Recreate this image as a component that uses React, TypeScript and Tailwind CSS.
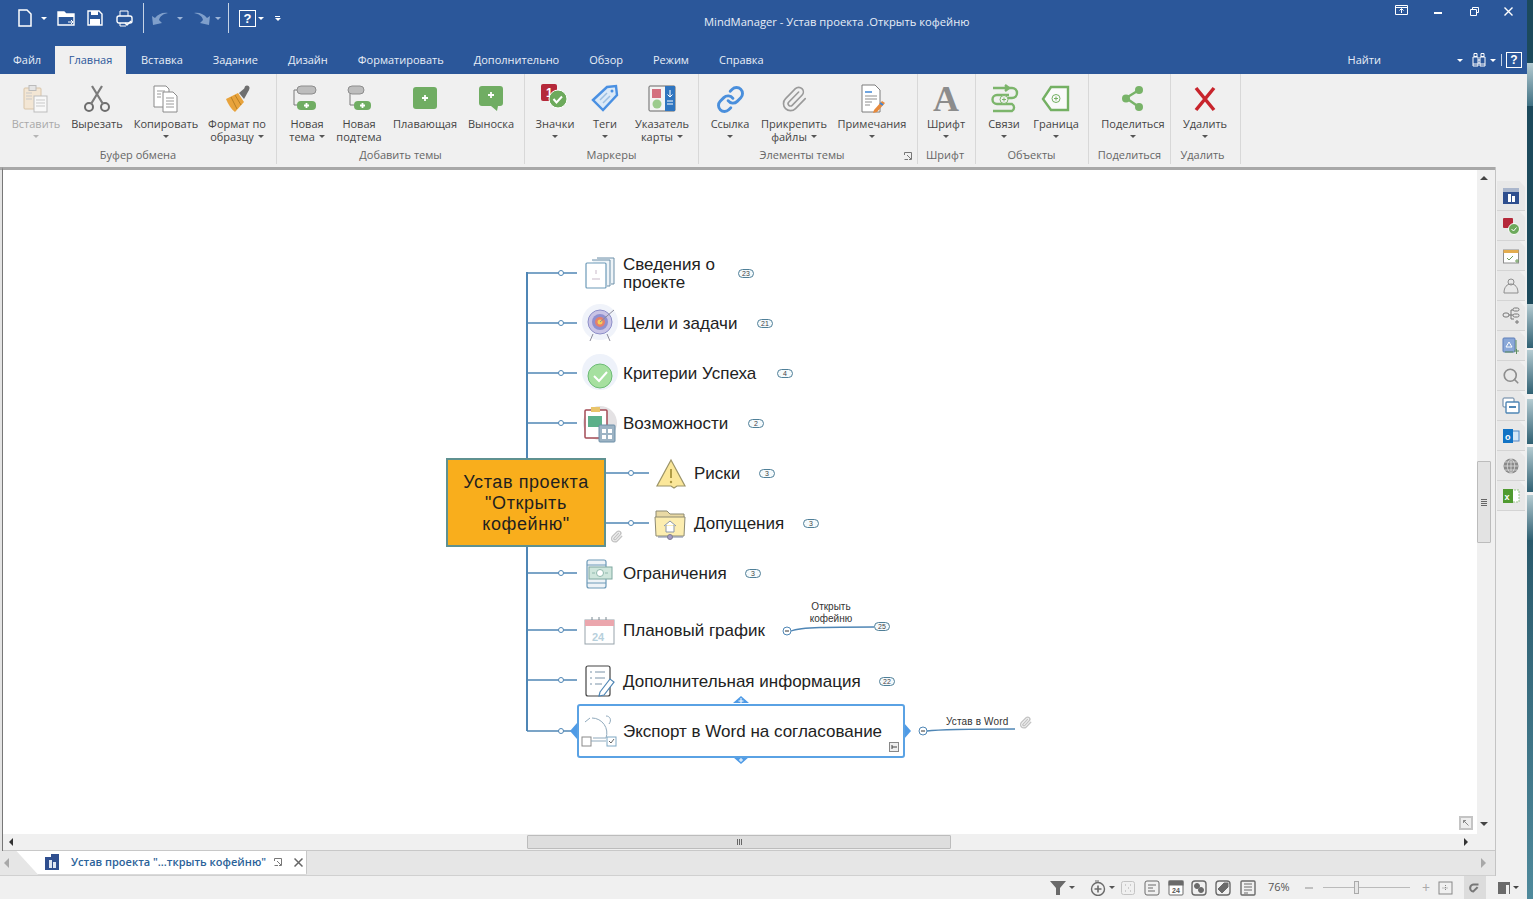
import { Link, Paperclip, Search } from "lucide-react";
import type { ReactNode } from "react";

const ui = { fontFamily: '"Open Sans", "Noto Sans", sans-serif' };

function Caret({ className = "border-t-[#555]" }: { className?: string }) {
  return <span className={`inline-block w-0 h-0 border-x-[3px] border-x-transparent border-t-[3px] ${className}`} />;
}

function Ico({ children, className = "w-[30px] h-[30px]", box = "0 0 30 30" }: { children: ReactNode; className?: string; box?: string }) {
  return (
    <svg viewBox={box} className={className} fill="none">
      {children}
    </svg>
  );
}

// ribbon icons
const Paste = () => (
  <Ico>
    <rect x="3" y="4" width="17" height="21" rx="1" fill="#f3e6d4" stroke="#d8c4a8" />
    <rect x="8" y="1.5" width="7" height="5" fill="#e5e5e5" stroke="#bbb" />
    <rect x="13" y="12" width="13" height="16" fill="#f8f8f8" stroke="#bdbdbd" />
    <path d="M15 16h9M15 19h9M15 22h9M5 9h6M5 12h6M5 15h6" stroke="#c9c9c9" />
  </Ico>
);
const Scissors = () => (
  <Ico>
    <circle cx="7" cy="23" r="4" stroke="#6d6d6d" strokeWidth="2" />
    <circle cx="23" cy="23" r="4" stroke="#6d6d6d" strokeWidth="2" />
    <path d="M9 20 20 2M21 20 10 2" stroke="#7b7b7b" strokeWidth="2.2" />
  </Ico>
);
const Copy = () => (
  <Ico>
    <path d="M3 2h12l3 3v18H3z" fill="#fff" stroke="#8a8a8a" />
    <path d="M12 8h10l4 4v16H12z" fill="#fff" stroke="#8a8a8a" />
    <path d="M6 7h8M6 10h4M6 13h4M15 14h8M15 17h8M15 20h8M15 23h8" stroke="#9a9a9a" />
  </Ico>
);
const Painter = () => (
  <Ico>
    <path d="M4 15 16 9l6 9-9 10C9 25 6 20 4 15z" fill="#e8a33c" />
    <path d="M9 13l6 12M13 11l6 10" stroke="#b97f24" />
    <path d="M17 9l7-6 3 3-5 9z" fill="#6f6f6f" />
    <circle cx="25" cy="4" r="2.5" fill="#6f6f6f" />
  </Ico>
);
const NewTopic = () => (
  <Ico>
    <rect x="5" y="2" width="19" height="8" rx="4" fill="#bdbdbd" stroke="#8d8d8d" />
    <path d="M5 6H2v15h4" stroke="#7b7b7b" />
    <rect x="5" y="17" width="19" height="9" rx="4" fill="#70ad63" />
    <path d="M14.500 19v5M12 21.500h5" stroke="#fff" strokeWidth="1.800" />
  </Ico>
);
const NewSub = () => (
  <Ico>
    <rect x="4" y="2" width="16" height="8" rx="4" fill="#bdbdbd" stroke="#8d8d8d" />
    <path d="M6 10v11h4" stroke="#7b7b7b" />
    <rect x="10" y="17" width="17" height="9" rx="4" fill="#70ad63" />
    <path d="M18.500 19v5M16 21.500h5" stroke="#fff" strokeWidth="1.800" />
  </Ico>
);
const Floating = () => (
  <Ico>
    <rect x="3" y="3" width="24" height="22" rx="3" fill="#70ad63" />
    <path d="M15 11v6M12 14h6" stroke="#fff" strokeWidth="1.800" />
  </Ico>
);
const Callout = () => (
  <Ico>
    <path d="M6 2h18a3 3 0 0 1 3 3v14a3 3 0 0 1-3 3h-2l-1 5-6-5H6a3 3 0 0 1-3-3V5a3 3 0 0 1 3-3z" fill="#70ad63" />
    <path d="M15 8v6M12 11h6" stroke="#fff" strokeWidth="1.800" />
  </Ico>
);
const Badges = () => (
  <Ico>
    <rect x="1" y="0" width="16" height="17" rx="2" fill="#b5293a" />
    <text x="6" y="13" fill="#fff" fontSize="12" fontWeight="700" fontFamily="Liberation Sans">1</text>
    <circle cx="18" cy="15" r="9" fill="#6daa5c" stroke="#fff" />
    <path d="M13.500 15l3 3.500 5.500-6" stroke="#fff" strokeWidth="2" />
  </Ico>
);
const Tag = () => (
  <Ico>
    <path d="M3 16 17 3l9-1 1 9-14 15z" fill="#dbe9f7" stroke="#4a90e2" strokeWidth="2.400" />
    <path d="M10 16l7-7M13 19l7-7" stroke="#9dbfe2" strokeWidth="1.500" />
    <circle cx="22" cy="7" r="1.500" fill="#4a90e2" />
  </Ico>
);
const Pointer = () => (
  <Ico>
    <rect x="2" y="2" width="26" height="25" rx="1" fill="#f4f4f4" stroke="#666" />
    <rect x="18" y="2" width="10" height="25" fill="#2f75c0" />
    <rect x="5" y="5" width="9" height="9" fill="#d4707f" />
    <circle cx="10" cy="20" r="4.500" fill="#9ccb8d" />
    <path d="M23 6v7M20.500 10.500 23 13l2.500-2.500" stroke="#fff" />
    <path d="M20 17h6M20 20h6" stroke="#fff" />
  </Ico>
);
const Note = () => (
  <Ico>
    <path d="M5 1h13l5 5v22H5z" fill="#fff" stroke="#7d7d7d" />
    <path d="M8 8h7" stroke="#3f87d6" strokeWidth="1.500" />
    <path d="M8 12h12M8 15h12M8 18h7M8 21h5" stroke="#8d8d8d" />
    <path d="M17 26l8-9 3 2-8 9-4 1z" fill="#e78a3d" />
    <path d="M23 19l3 2" stroke="#3f87d6" strokeWidth="2" />
  </Ico>
);
const Links = () => (
  <Ico>
    <path d="M19 4h5a4 4 0 0 1 0 10h-4" stroke="#7cb56b" strokeWidth="2.400" transform="translate(-1 0)" />
    <path d="M20 11H8a4 4 0 0 0 0 9h15a4 4 0 0 1 0 7H4" stroke="#7cb56b" strokeWidth="2.400" />
    <path d="M4 4h15M16 1l4 3-4 3" stroke="#7cb56b" strokeWidth="2.400" />
    <circle cx="15" cy="15.500" r="4" fill="#f0f0f0" stroke="#7cb56b" />
    <path d="M15 13.500v4M13 15.500h4" stroke="#7cb56b" />
  </Ico>
);
const Boundary = () => (
  <Ico>
    <path d="M10 3h17v23H10l-8-11z" stroke="#74b063" strokeWidth="2.400" fill="#fafafa" />
    <circle cx="15" cy="14.500" r="4" stroke="#74b063" />
    <path d="M15 12.500v4M13 14.500h4" stroke="#74b063" />
  </Ico>
);
const Share = () => (
  <Ico>
    <path d="M21 6 8 14l13 9" stroke="#78b368" strokeWidth="2.400" />
    <circle cx="21" cy="6" r="4" fill="#78b368" />
    <circle cx="8" cy="14.500" r="4" fill="#78b368" />
    <circle cx="21" cy="23" r="4" fill="#78b368" />
  </Ico>
);
const Delete = () => (
  <Ico>
    <path d="M6 4l18 22M24 4 6 26" stroke="#c8242c" strokeWidth="3.500" />
  </Ico>
);

type Btn = { w: string; icon: ReactNode; lines: string[]; caret?: "inline" | "below"; dim?: boolean };
type Group = { w: string; pl: string; label: string; labelX: string; launcher?: boolean; items: Btn[] };

const groups: Group[] = [
  {
    w: "w-[277px]", pl: "pl-[6px]", label: "Буфер обмена", labelX: "pl-0",
    items: [
      { w: "w-[60px]", icon: <Paste />, lines: ["Вставить"], caret: "below", dim: true },
      { w: "w-[62px]", icon: <Scissors />, lines: ["Вырезать"] },
      { w: "w-[76px]", icon: <Copy />, lines: ["Копировать"], caret: "below" },
      { w: "w-[66px]", icon: <Painter />, lines: ["Формат по", "образцу"], caret: "inline" },
    ],
  },
  {
    w: "w-[248px]", pl: "pl-[4px]", label: "Добавить темы", labelX: "pl-0",
    items: [
      { w: "w-[52px]", icon: <NewTopic />, lines: ["Новая", "тема"], caret: "inline" },
      { w: "w-[52px]", icon: <NewSub />, lines: ["Новая", "подтема"] },
      { w: "w-[80px]", icon: <Floating />, lines: ["Плавающая"] },
      { w: "w-[52px]", icon: <Callout />, lines: ["Выноска"] },
    ],
  },
  {
    w: "w-[174px]", pl: "pl-[5px]", label: "Маркеры", labelX: "pl-0",
    items: [
      { w: "w-[50px]", icon: <Badges />, lines: ["Значки"], caret: "below" },
      { w: "w-[50px]", icon: <Tag />, lines: ["Теги"], caret: "below" },
      { w: "w-[64px]", icon: <Pointer />, lines: ["Указатель", "карты"], caret: "inline" },
    ],
  },
  {
    w: "w-[219px]", pl: "pl-[3px]", label: "Элементы темы", labelX: "pr-[12px]", launcher: true,
    items: [
      { w: "w-[56px]", icon: <Link className="w-[29px] h-[29px] text-[#4a8fdc]" strokeWidth={2.4} />, lines: ["Ссылка"], caret: "below" },
      { w: "w-[72px]", icon: <Paperclip className="w-[28px] h-[28px] text-[#9a9a9a]" strokeWidth={1.4} />, lines: ["Прикрепить", "файлы"], caret: "inline" },
      { w: "w-[84px]", icon: <Note />, lines: ["Примечания"], caret: "below" },
    ],
  },
  {
    w: "w-[58px]", pl: "pl-0", label: "Шрифт", labelX: "pr-[3px]",
    items: [
      {
        w: "w-[56px]",
        icon: <span className="text-[36px] leading-[30px] text-[#8c8c8c] font-bold" style={{ fontFamily: "Liberation Serif" }}>A</span>,
        lines: ["Шрифт"],
        caret: "below",
      },
    ],
  },
  {
    w: "w-[113px]", pl: "pl-[3px]", label: "Объекты", labelX: "pr-[1px]",
    items: [
      { w: "w-[50px]", icon: <Links />, lines: ["Связи"], caret: "below" },
      { w: "w-[54px]", icon: <Boundary />, lines: ["Граница"], caret: "below" },
    ],
  },
  {
    w: "w-[82px]", pl: "pl-[4px]", label: "Поделиться", labelX: "pl-0",
    items: [{ w: "w-[80px]", icon: <Share />, lines: ["Поделиться"], caret: "below" }],
  },
  {
    w: "w-[70px]", pl: "pl-[4px]", label: "Удалить", labelX: "pr-[6px]",
    items: [{ w: "w-[60px]", icon: <Delete />, lines: ["Удалить"], caret: "below" }],
  },
];

function RibbonButton({ b }: { b: Btn }) {
  return (
    <div className={`${b.w} flex flex-col items-center shrink-0 ${b.dim ? "text-[#a9a9a9]" : "text-[#444]"}`}>
      <div className="h-[30px] w-[30px] flex items-center justify-center mt-[10px] mb-[3px]">{b.icon}</div>
      {b.lines.map((l, i) => (
        <div key={l} className="text-[11px] leading-[13px] whitespace-nowrap flex items-center gap-[4px]">
          {l}
          {b.caret === "inline" && i === b.lines.length - 1 && <Caret />}
        </div>
      ))}
      {b.caret === "below" && (
        <div className="h-[13px] flex items-center">
          <Caret className={b.dim ? "border-t-[#b5b5b5]" : "border-t-[#555]"} />
        </div>
      )}
    </div>
  );
}

function RibbonGroup({ g }: { g: Group }) {
  return (
    <div className={`${g.w} shrink-0 h-[90px] flex flex-col border-r border-[#d8d8d8]`}>
      <div className={`flex ${g.pl} h-[74px]`}>
        {g.items.map((b) => (
          <RibbonButton key={b.lines[0]} b={b} />
        ))}
      </div>
      <div className={`relative h-[14px] text-[11px] leading-[14px] text-[#666] text-center ${g.labelX}`}>
        {g.label}
        {g.launcher && (
          <svg viewBox="0 0 8 8" className="absolute right-[5px] top-[4px] w-[8px] h-[8px]" fill="none" stroke="#777">
            <path d="M0.500 3V0.500H7.500M0.500 7.500H4M7.500 0.500V7.500H5M3 3l4 4" />
          </svg>
        )}
      </div>
    </div>
  );
}

const QatWhite = "#fff";

function Qat() {
  return (
    <div className="w-[704px] shrink-0 flex items-center h-[36px] pl-[17px]">
      <Ico className="w-[16px] h-[18px]" box="0 0 16 18">
        <path d="M2 1h8l4 4v12H2z" stroke={QatWhite} strokeWidth="1.500" />
      </Ico>
      <span className="ml-[8px] flex"><Caret className="border-t-white" /></span>
      <Ico className="w-[18px] h-[18px] ml-[10px]" box="0 0 18 18">
        <path d="M1 3h6l2 2h8v11H1z" stroke={QatWhite} strokeWidth="1.400" />
        <path d="M1 3h6l2 2h8v3H1z" fill={QatWhite} />
        <path d="M11 13h5M14 11l2 2-2 2" stroke={QatWhite} />
      </Ico>
      <Ico className="w-[16px] h-[16px] ml-[12px]" box="0 0 16 16">
        <path d="M1 1h11l3 3v11H1z" stroke={QatWhite} strokeWidth="1.400" />
        <path d="M4 1h7v4H4zM3 9h10v6H3z" fill={QatWhite} />
      </Ico>
      <Ico className="w-[17px] h-[17px] ml-[13px]" box="0 0 17 17">
        <path d="M4 6V1h8v5" stroke={QatWhite} />
        <rect x="1" y="6" width="15" height="7" rx="2" stroke={QatWhite} strokeWidth="1.400" />
        <path d="M4 13v3h6" stroke={QatWhite} />
        <path d="M9 13l2 2 4-4" stroke={QatWhite} strokeWidth="1.400" />
      </Ico>
      <div className="w-px h-[30px] bg-[#c5d3e6] ml-[10px]" />
      <Ico className="w-[18px] h-[16px] ml-[7px]" box="0 0 18 16">
        <path d="M2 15 1 6l3 2c3-4 8-6 13-5-5 1-8 3-9 7l3 3z" fill="#7f9fcb" />
      </Ico>
      <span className="ml-[8px] flex"><Caret className="border-t-[#9db5d8]" /></span>
      <Ico className="w-[18px] h-[16px] ml-[10px]" box="0 0 18 16">
        <path d="M16 15l1-9-3 2C11 4 6 2 1 3c5 1 8 3 9 7l-3 3z" fill="#7f9fcb" />
      </Ico>
      <span className="ml-[4px] flex"><Caret className="border-t-[#9db5d8]" /></span>
      <div className="w-px h-[30px] bg-[#c5d3e6] ml-[7px]" />
      <div className="ml-[10px] w-[17px] h-[17px] border border-white flex items-center justify-center text-white text-[13px] font-bold leading-none" style={{ fontFamily: "Liberation Sans" }}>?</div>
      <span className="ml-[2px] flex"><Caret className="border-t-white" /></span>
      <span className="ml-[11px] flex flex-col gap-[1px]">
        <span className="w-[5px] h-px bg-white" />
        <Caret className="border-t-white" />
      </span>
    </div>
  );
}

function WindowButtons() {
  return (
    <div className="ml-auto flex items-start pt-[4px] h-[36px] text-white">
      <svg viewBox="0 0 13 10" className="w-[13px] h-[10px] mt-[1px] mr-[26px]" fill="none" stroke="#fff">
        <path d="M0.500 0.500h12v9H0.500zM0.500 2.500h12M6.500 8V4M4.500 5.500l2-2 2 2" />
      </svg>
      <div className="w-[8px] h-[2px] bg-white mt-[8px] mr-[28px]" />
      <svg viewBox="0 0 9 9" className="w-[9px] h-[9px] mt-[3px] mr-[25px]" fill="none" stroke="#fff">
        <path d="M2.500 2V0.500h6v5H7M0.500 2.500h6v6h-6z" />
      </svg>
      <svg viewBox="0 0 9 9" className="w-[9px] h-[9px] mt-[3px] mr-[14px]" fill="none" stroke="#fff" strokeWidth="1.400">
        <path d="M0.500 0.500l8 8M8.500 0.500l-8 8" />
      </svg>
    </div>
  );
}

const tabs = ["Вставка", "Задание", "Дизайн", "Форматировать", "Дополнительно", "Обзор", "Режим", "Справка"];

function TabRow() {
  return (
    <div className="h-[28px] flex items-end text-[11px] text-[#e8eef7]">
      <div className="w-[55px] pl-[13px] h-[28px] flex items-center">Файл</div>
      <div className="bg-[#f0f0f0] text-[#2b579a] h-[28px] w-[71px] flex items-center justify-center">Главная</div>
      {tabs.map((t) => (
        <div key={t} className="px-[15px] h-[28px] flex items-center">{t}</div>
      ))}
      <div className="ml-auto h-[28px] flex items-center">
        <span>Найти</span>
        <span className="ml-[76px] flex"><Caret className="border-t-white" /></span>
        <svg viewBox="0 0 16 16" className="w-[16px] h-[16px] ml-[8px]" fill="none" stroke="#fff">
          <path d="M3 1.500h3v3H3zM10 1.500h3v3h-3zM2 5h5v9H2zM9 5h5v9H9zM7 8h2M7 11h2M2 12h5M9 12h5" />
        </svg>
        <span className="ml-[3px] flex"><Caret className="border-t-white" /></span>
        <div className="w-px h-[12px] bg-[#c5d3e6] ml-[5px]" />
        <div className="ml-[4px] mr-[5px] w-[16px] h-[16px] border border-white text-white text-[12px] font-bold flex items-center justify-center leading-none" style={{ fontFamily: "Liberation Sans" }}>?</div>
      </div>
    </div>
  );
}

// map: page coordinates, origin of the map box is (440, 250)
const nodes = [
  { c: "left-[183px] top-[64px]", t: "Цели и задачи" },
  { c: "left-[183px] top-[114px]", t: "Критерии Успеха" },
  { c: "left-[183px] top-[164px]", t: "Возможности" },
  { c: "left-[254px] top-[214px]", t: "Риски" },
  { c: "left-[254px] top-[264px]", t: "Допущения" },
  { c: "left-[183px] top-[314px]", t: "Ограничения" },
  { c: "left-[183px] top-[371px]", t: "Плановый график" },
  { c: "left-[183px] top-[422px]", t: "Дополнительная информация" },
  { c: "left-[183px] top-[472px]", t: "Экспорт в Word на согласование" },
];

const pills = [
  { c: "left-[298px] top-[19px]", t: "23" },
  { c: "left-[317px] top-[69px]", t: "21" },
  { c: "left-[337px] top-[119px]", t: "4" },
  { c: "left-[308px] top-[169px]", t: "2" },
  { c: "left-[319px] top-[219px]", t: "3" },
  { c: "left-[363px] top-[269px]", t: "3" },
  { c: "left-[305px] top-[319px]", t: "3" },
  { c: "left-[434px] top-[372px]", t: "25" },
  { c: "left-[439px] top-[427px]", t: "22" },
];

const stubs = [273, 323, 373, 423, 573, 630, 680, 731];

function Connectors() {
  const line = "#4f86b5";
  return (
    <>
      <path d="M527 272V458M527 547V731" stroke={line} strokeWidth="2" />
      {stubs.map((y) => (
        <g key={y}>
          <path d={`M527 ${y}H577`} stroke={line} strokeWidth="1.600" />
          <circle cx="561" cy={y} r="2.500" fill="#fff" stroke={line} />
        </g>
      ))}
      {[473, 523].map((y) => (
        <g key={y}>
          <path d={`M606 ${y}H649`} stroke={line} strokeWidth="1.600" />
          <circle cx="631" cy={y} r="2.500" fill="#fff" stroke={line} />
        </g>
      ))}
      <path d="M791 631c10-4 40-4 83-4" stroke={line} strokeWidth="1.300" />
      <circle cx="787" cy="631" r="4" fill="#fff" stroke={line} />
      <path d="M785 631h4" stroke="#333" />
      <path d="M927 731c16-2 50-2 88-2" stroke={line} strokeWidth="1.600" />
      <circle cx="923" cy="731" r="4" fill="#fff" stroke={line} />
      <path d="M921 731h4" stroke="#333" />
    </>
  );
}

function MapIcons() {
  return (
    <>
      {/* сведения */}
      <path d="M597 258h17v26h-3M592 260h18v26h-3" stroke="#6d8fa8" fill="#eef4f8" />
      <rect x="586" y="263" width="20" height="25" rx="1" fill="#fff" stroke="#6d9ab8" strokeWidth="1.200" />
      <path d="M596 270v4M592 279h8" stroke="#c9b9c9" />
      {/* цели */}
      <circle cx="600" cy="322" r="18" fill="#f0f3fa" />
      <circle cx="600" cy="322" r="12" fill="#c9c4e6" stroke="#8d8fc8" />
      <circle cx="600" cy="322" r="8" fill="#8f8fd0" />
      <circle cx="600" cy="322" r="5" fill="#e57f6d" />
      <circle cx="600" cy="322" r="2.500" fill="#f4cf5d" />
      <path d="M600 322l14-12M593 334l-3 7M607 334l3 7" stroke="#8a8a9a" />
      {/* критерии */}
      <circle cx="600" cy="372" r="18" fill="#eef2fa" />
      <circle cx="600" cy="376" r="12" fill="#a6e0a0" stroke="#6dbb76" />
      <path d="M594 376l5 5 8-9" stroke="#fff" strokeWidth="2" />
      {/* возможности */}
      <circle cx="600" cy="423" r="17" fill="#e4e2e4" />
      <rect x="585" y="410" width="22" height="28" rx="1" fill="#fff" stroke="#a34b56" strokeWidth="1.500" />
      <rect x="591" y="407" width="9" height="5" fill="#e9c46a" />
      <rect x="588" y="416" width="14" height="11" fill="#5cb08a" />
      <rect x="599" y="425" width="16" height="17" rx="1" fill="#9cb3c4" stroke="#6d8fa8" />
      <path d="M602 429h4v4h-4zM608 429h4v4h-4zM602 435h4v4h-4zM608 435h4v4h-4z" fill="#fff" />
      {/* риски */}
      <path d="M671 460l14 26-8 0-3 2-3-2h-14z" fill="#fbe79a" stroke="#9c9468" strokeWidth="1.200" />
      <path d="M671 469v9" stroke="#a8943f" strokeWidth="1.800" />
      <circle cx="671" cy="482" r="1.200" fill="#a8943f" />
      {/* допущения */}
      <path d="M656 511h11l3 3h14v5h-28z" fill="#e9d9a4" stroke="#8d8a73" />
      <path d="M655 517h30l-1 19h-28z" fill="#fcedb0" stroke="#8d8a73" />
      <path d="M664 526l6-5 6 5M666 525v7h8v-7" stroke="#8b97a8" fill="#fff" />
      <path d="M658 537h25" stroke="#7d86a0" />
      <circle cx="670" cy="537" r="2.500" fill="#a59ac4" stroke="#7d7d90" />
      {/* ограничения */}
      <rect x="587" y="560" width="19" height="28" rx="2" fill="#eef3f7" stroke="#6d9ab8" strokeWidth="1.200" />
      <path d="M587 565h19M587 583h19" stroke="#6d9ab8" />
      <rect x="589" y="567" width="23" height="12" fill="#cfe6dc" stroke="#7fa8a0" />
      <circle cx="600" cy="573" r="3.500" fill="#fff" stroke="#8fb8ac" />
      <path d="M592 573h3M605 573h3" stroke="#8fb8ac" />
      {/* график */}
      <rect x="585" y="620" width="29" height="24" fill="#fff" stroke="#97a3ab" />
      <rect x="585" y="620" width="29" height="6" fill="#eba6ad" />
      <path d="M592 617v3M599 617v3M606 617v3" stroke="#7d8a93" />
      <text x="592" y="641" fill="#b7d0dc" fontSize="11" fontWeight="700" fontFamily="Liberation Sans">24</text>
      {/* доп */}
      <rect x="586" y="666" width="24" height="30" rx="2" fill="#fff" stroke="#444" strokeWidth="1.200" />
      <path d="M590 672h2M590 678h2M590 684h2M595 672h10M595 678h10M595 684h7" stroke="#7a93a8" />
      <path d="M600 692l10-13 4 3-10 13-5 1z" fill="#fff" stroke="#4f86b5" strokeWidth="1.200" />
      {/* выделенный */}
      <path d="M741 696l8 7h-16zM741 764l8-7h-16zM570 731l7-8v16zM911 731l-7-8v16z" fill="#4f9be6" />
      <rect x="578" y="705" width="326" height="52" rx="2" fill="#fff" stroke="#5aa2e4" strokeWidth="2" />
      <path d="M741 698v5M738.500 701h5M741 758v4M739 760h4" stroke="#fff" />
      <path d="M592 718a15 15 0 0 1 14 20H593" stroke="#8fa9bc" />
      <path d="M606 716c4 0 6 4 3 8" stroke="#8fa9bc" />
      <path d="M585 722l5-4" stroke="#8fa9bc" />
      <rect x="582" y="737" width="9" height="9" stroke="#8a8a8a" fill="#fff" />
      <path d="M591 741h15" stroke="#8fa9bc" />
      <rect x="607" y="737" width="9" height="9" stroke="#7ea8c4" fill="#fff" />
      <path d="M609 741l2 2 3-4" stroke="#666" />
      <rect x="889.500" y="742.500" width="9" height="9" fill="#eee" stroke="#888" />
      <path d="M892 747h5M892 745v4" stroke="#444" />
    </>
  );
}

function Clip({ c }: { c: string }) {
  return <Paperclip className={`absolute ${c} w-[13px] h-[13px] text-[#c4c4c4]`} strokeWidth={2.6} />;
}

function MindMap() {
  return (
    <div className="relative w-[600px] h-[520px]" style={{ fontFamily: '"Liberation Sans", sans-serif' }}>
      <svg viewBox="440 250 600 520" className="absolute inset-0 w-[600px] h-[520px]" fill="none">
        <Connectors />
        <MapIcons />
      </svg>
      <div className="absolute left-[6px] top-[208px] w-[160px] h-[89px] pt-[1px] bg-[#f9ae1c] border-2 border-[#5f9190] flex items-center justify-center text-center text-[18px] leading-[21px] tracking-[0.6px] text-[#1f1f1f]">
        <div>
          Устав проекта
          <br />
          "Открыть
          <br />
          кофейню"
        </div>
      </div>
      <div className="absolute left-[183px] top-[6px] text-[17px] leading-[18px] text-[#222]">
        Сведения о
        <br />
        проекте
      </div>
      {nodes.map((n) => (
        <div key={n.t} className={`absolute ${n.c} text-[17px] leading-[20px] text-[#222] whitespace-nowrap`}>
          {n.t}
        </div>
      ))}
      {pills.map((p) => (
        <div key={p.c} className={`absolute ${p.c} w-[16px] h-[9px] rounded-full border border-[#4f7f98] bg-[#f5fafc] text-[7px] leading-[7px] text-center text-[#444]`}>
          {p.t}
        </div>
      ))}
      <div className="absolute left-[360px] top-[351px] w-[62px] text-center text-[10px] leading-[12px] text-[#333]">
        Открыть
        <br />
        кофейню
      </div>
      <div className="absolute left-[506px] top-[466px] text-[10px] leading-[12px] tracking-[0.15px] text-[#333] whitespace-nowrap">Устав в Word</div>
      <Clip c="left-[170px] top-[280px]" />
      <Clip c="left-[579px] top-[466px]" />
    </div>
  );
}

function SideTab({ children }: { children: ReactNode }) {
  return (
    <div className="w-[28px] h-[30px] pr-[1px] bg-[#e8e8e8] border-b border-[#d4d4d4] flex items-center justify-center [clip-path:polygon(0_0,80%_0,100%_20%,100%_100%,0_100%)]">
      {children}
    </div>
  );
}

function SideBar() {
  const s = "w-[18px] h-[18px]";
  return (
    <div className="w-[32px] shrink-0 bg-[#f0f0f0] border-l border-[#c4c4c4] flex flex-col pl-[1px] pt-[14px]">
      <SideTab>
        <Ico className={s} box="0 0 18 18">
          <rect x="1" y="1" width="16" height="16" fill="#2f4f8f" />
          <rect x="1" y="1" width="16" height="4" fill="#aab6cc" />
          <path d="M6 7h3v8H6zM10 9h3v6h-3z" fill="#fff" />
        </Ico>
      </SideTab>
      <SideTab>
        <Ico className={s} box="0 0 18 18">
          <rect x="1" y="1" width="10" height="10" rx="1" fill="#b5293a" />
          <circle cx="12" cy="12" r="5.500" fill="#6daa5c" stroke="#fff" />
          <path d="M9.500 12l2 2 3-3.500" stroke="#fff" />
        </Ico>
      </SideTab>
      <SideTab>
        <Ico className={s} box="0 0 18 18">
          <rect x="1.500" y="3" width="15" height="13" stroke="#8d8d8d" fill="#fff" />
          <rect x="1.500" y="3" width="15" height="3" fill="#e3ac4e" />
          <path d="M5 11l2 2 4-4M13 14h4M15 12v4" stroke="#6f9e5c" />
        </Ico>
      </SideTab>
      <SideTab>
        <Ico className={s} box="0 0 18 18">
          <circle cx="9" cy="5" r="3" stroke="#8d8d8d" />
          <path d="M2 16c0-6 3-9 7-9s7 3 7 9z" stroke="#8d8d8d" />
        </Ico>
      </SideTab>
      <SideTab>
        <Ico className={s} box="0 0 18 18">
          <rect x="1" y="6" width="6" height="4" rx="2" stroke="#777" />
          <rect x="11" y="1" width="6" height="3" rx="1.500" stroke="#777" />
          <rect x="11" y="7" width="6" height="3" rx="1.500" stroke="#777" />
          <path d="M7 8h4M9 3h2M9 3v9h3M13 15h4M15 13v4" stroke="#777" />
        </Ico>
      </SideTab>
      <SideTab>
        <Ico className={s} box="0 0 18 18">
          <rect x="1" y="1" width="12" height="14" rx="1" fill="#8aa8d8" stroke="#5f7fb8" />
          <path d="M4 10l3-5 3 5z" stroke="#fff" />
          <path d="M14 3v10M3 15h8M12 14h5M14.500 12v5" stroke="#5f8f5f" />
        </Ico>
      </SideTab>
      <SideTab>
        <Search className="w-[18px] h-[18px] text-[#8d8d8d]" strokeWidth={2.2} />
      </SideTab>
      <SideTab>
        <Ico className={s} box="0 0 18 18">
          <rect x="1" y="1" width="11" height="9" rx="1" stroke="#5f7f9f" fill="#fff" />
          <rect x="4" y="5" width="13" height="11" rx="1" stroke="#4f86b5" strokeWidth="1.400" fill="#fff" />
          <path d="M7 10h7" stroke="#4f86b5" strokeWidth="2" />
        </Ico>
      </SideTab>
      <SideTab>
        <Ico className={s} box="0 0 18 18">
          <rect x="8" y="4" width="9" height="10" fill="#d5e6f7" stroke="#4f86c5" />
          <rect x="1" y="2" width="10" height="14" fill="#1273c4" />
          <text x="3" y="12.500" fill="#fff" fontSize="9" fontWeight="700" fontFamily="Liberation Sans">o</text>
        </Ico>
      </SideTab>
      <SideTab>
        <Ico className={s} box="0 0 18 18">
          <circle cx="9" cy="9" r="7.500" fill="#8a8a8a" />
          <path d="M2 9h14M3 5h12M3 13h12M9 1.500v15M9 1.500c-5 4-5 11 0 15M9 1.500c5 4 5 11 0 15" stroke="#e8e8e8" strokeWidth="0.700" />
        </Ico>
      </SideTab>
      <SideTab>
        <Ico className={s} box="0 0 18 18">
          <rect x="9" y="3" width="8" height="12" fill="#fff" stroke="#9cc48c" strokeDasharray="2 1" />
          <rect x="1" y="2" width="10" height="14" fill="#4f9a2f" />
          <text x="2.500" y="12.500" fill="#fff" fontSize="9" fontWeight="700" fontFamily="Liberation Sans">x</text>
        </Ico>
      </SideTab>
    </div>
  );
}

function VScroll() {
  return (
    <div className="w-[14px] shrink-0 bg-[#f0f0f0] flex flex-col items-center">
      <div className="h-[16px] flex items-center">
        <span className="w-0 h-0 border-x-[4px] border-x-transparent border-b-[4px] border-b-[#444]" />
      </div>
      <div className="h-[275px]" />
      <div className="w-[14px] h-[82px] bg-[#e3e3e3] border border-[#bcbcbc] rounded-[1px] flex flex-col items-center justify-center gap-[1px]">
        <span className="w-[6px] h-px bg-[#666]" />
        <span className="w-[6px] h-px bg-[#666]" />
        <span className="w-[6px] h-px bg-[#666]" />
        <span className="w-[6px] h-px bg-[#666]" />
      </div>
      <div className="flex-1" />
      <div className="relative h-[16px] mb-[2px] flex items-center">
        <span className="w-0 h-0 border-x-[4px] border-x-transparent border-t-[4px] border-t-[#444]" />
        <div className="absolute -left-[21px] top-0 w-[14px] h-[14px] border-2 border-[#c4c4c4] bg-[#eee] flex items-center justify-center">
          <svg viewBox="0 0 7 7" className="w-[7px] h-[7px]" fill="none" stroke="#888">
            <path d="M0.500 3V0.500H3M0.500 0.500l5 5" />
          </svg>
        </div>
      </div>
    </div>
  );
}

function HScroll() {
  return (
    <div className="h-[17px] bg-[#f0f0f0] flex items-center border-b border-[#c8c8c8]">
      <span className="ml-[6px] w-0 h-0 border-y-[4px] border-y-transparent border-r-[4px] border-r-[#333]" />
      <div className="ml-[514px] w-[424px] h-[14px] bg-[#dedede] border border-[#bcbcbc] rounded-[1px] flex items-center justify-center gap-[1px]">
        <span className="w-px h-[6px] bg-[#666]" />
        <span className="w-px h-[6px] bg-[#666]" />
        <span className="w-px h-[6px] bg-[#666]" />
      </div>
      <span className="ml-[513px] w-0 h-0 border-y-[4px] border-y-transparent border-l-[4px] border-l-[#333]" />
    </div>
  );
}

function TabBar() {
  return (
    <div className="h-[25px] bg-[#e6e6e6] border-b border-[#d0d0d0] flex items-center">
      <span className="ml-[4px] w-0 h-0 border-y-[5px] border-y-transparent border-r-[5px] border-r-[#a8a8a8]" />
      <div className="ml-[7px] w-[291px] h-[24px] -mt-[1px] bg-white border-r border-b border-[#c8c8c8] rounded-br-[2px] flex items-center pl-[29px] [clip-path:polygon(0_0,100%_0,100%_100%,22px_100%)]">
        <Ico className="w-[14px] h-[16px]" box="0 0 14 16">
          <rect x="0" y="0" width="14" height="16" fill="#2f4f8f" />
          <rect x="0" y="0" width="6" height="3" fill="#fff" />
          <path d="M4 6h3v8H4zM8 8h3v6H8z" fill="#dfe6f2" />
        </Ico>
        <span className="ml-[12px] w-[191px] text-[11px] font-semibold text-[#2b6299] whitespace-nowrap">Устав проекта "...ткрыть кофейню"</span>
        <svg viewBox="0 0 8 8" className="ml-[12px] w-[8px] h-[8px]" fill="none" stroke="#777">
          <path d="M0.500 3V0.500H7.500M0.500 7.500H4M7.500 0.500V7.500H5M3 3l4 4" />
        </svg>
        <svg viewBox="0 0 9 9" className="ml-[12px] w-[9px] h-[9px]" fill="none" stroke="#666" strokeWidth="1.500">
          <path d="M0.500 0.500l8 8M8.500 0.500l-8 8" />
        </svg>
      </div>
      <span className="ml-auto mr-[9px] w-0 h-0 border-y-[5px] border-y-transparent border-l-[5px] border-l-[#a8a8a8]" />
    </div>
  );
}

function StatusIcon({ children, c }: { children: ReactNode; c: string }) {
  return (
    <svg viewBox="0 0 16 16" className={`w-[16px] h-[16px] ${c}`} fill="none" stroke="#6a6a6a">
      {children}
    </svg>
  );
}

function StatusBar() {
  return (
    <div className="h-[23px] bg-[#f0f0f0] flex items-center text-[11px] text-[#555]">
      <StatusIcon c="ml-[1050px]">
        <path d="M0 1h16L10 8v7H6V8z" fill="#6a6a6a" stroke="none" />
      </StatusIcon>
      <span className="ml-[3px] flex"><Caret /></span>
      <StatusIcon c="ml-[15px]">
        <circle cx="8" cy="9" r="6.500" strokeWidth="1.400" />
        <path d="M8 5.500v7M4.500 9h7" strokeWidth="1.600" />
        <path d="M5 1h4" />
      </StatusIcon>
      <span className="ml-[3px] flex"><Caret /></span>
      <StatusIcon c="ml-[5px]">
        <rect x="1.500" y="1.500" width="13" height="13" rx="2" stroke="#c4c4c4" />
        <path d="M5 5h1M10 5h1M8 8h1M5 11h1M10 11h1" stroke="#aaa" />
      </StatusIcon>
      <StatusIcon c="ml-[8px]">
        <rect x="1" y="1" width="14" height="14" rx="2" />
        <path d="M4 5h8M4 8h5M4 11h7" />
      </StatusIcon>
      <StatusIcon c="ml-[8px]">
        <rect x="1" y="1" width="14" height="14" rx="1" fill="#fff" />
        <rect x="1" y="1" width="14" height="4" fill="#6a6a6a" />
        <text x="4" y="13" fontSize="7" fontWeight="700" fill="#555" stroke="none" fontFamily="Liberation Sans">24</text>
      </StatusIcon>
      <StatusIcon c="ml-[7px]">
        <rect x="1" y="1" width="14" height="14" rx="3" strokeWidth="1.400" />
        <circle cx="6" cy="6" r="2.500" fill="#6a6a6a" />
        <circle cx="10" cy="10" r="2.500" fill="#6a6a6a" />
      </StatusIcon>
      <StatusIcon c="ml-[8px]">
        <rect x="1" y="1" width="14" height="14" rx="3" strokeWidth="1.400" />
        <path d="M3 9l6-6h4v4l-6 6z" fill="#6a6a6a" />
      </StatusIcon>
      <StatusIcon c="ml-[9px]">
        <rect x="1" y="1" width="14" height="14" rx="1" strokeWidth="1.400" />
        <path d="M4 4h8M4 7h8M4 10h8M4 13h4" />
      </StatusIcon>
      <span className="ml-[12px] w-[22px]">76%</span>
      <span className="ml-[15px] w-[8px] h-[2px] bg-[#c0c0c0]" />
      <div className="ml-[10px] w-[87px] h-px bg-[#bbb] relative">
        <span className="absolute left-[31px] -top-[6px] w-[5px] h-[13px] bg-[#e6e6e6] border border-[#aaa]" />
      </div>
      <span className="ml-[12px] text-[14px] leading-none text-[#aaa]">+</span>
      <StatusIcon c="ml-[8px]">
        <rect x="1" y="2" width="13" height="12" stroke="#888" />
        <path d="M7.500 5v6M4.500 8h6" stroke="#888" strokeDasharray="1 1" />
      </StatusIcon>
      <div className="ml-[10px] w-[22px] h-[23px] bg-[#dcdcdc] flex items-center justify-center">
        <svg viewBox="0 0 16 16" className="w-[14px] h-[14px]" fill="none" stroke="#777" strokeWidth="2.400">
          <path d="M12 4H7a4 4 0 0 0-1 8l5-5" />
        </svg>
      </div>
      <svg viewBox="0 0 12 12" className="ml-[12px] w-[12px] h-[12px]">
        <rect x="0" y="0" width="12" height="12" fill="#6a6a6a" />
        <rect x="8" y="3" width="3" height="9" fill="#f0f0f0" />
      </svg>
      <span className="ml-[3px] flex"><Caret className="border-t-[#444]" /></span>
    </div>
  );
}

const stripBlocks = [
  "h-[63px] bg-[#1c4a5c]",
  "h-[43px] bg-gradient-to-b from-[#b5ccd2] to-[#3f7183]",
  "h-[198px] bg-[#1c4a5c]",
  "h-[44px] bg-gradient-to-b from-[#b5ccd2] to-[#2f6173]",
  "h-[44px] bg-gradient-to-b from-[#b5ccd2] to-[#2f6173] mt-[2px]",
  "h-[45px] bg-gradient-to-b from-[#b5ccd2] to-[#2f6173] mt-[5px]",
  "h-[45px] bg-gradient-to-b from-[#b5ccd2] to-[#2f6173] mt-[3px]",
  "h-[45px] bg-gradient-to-b from-[#b5ccd2] to-[#2f6173] mt-[3px]",
  "flex-1 bg-gradient-to-b from-[#2a5a6c] to-[#4f8a9c]",
];

export default function App() {
  return (
    <div className="w-[1533px] h-[899px] flex overflow-hidden bg-[#f0f0f0]" style={ui}>
      <div className="w-[1527px] shrink-0 flex flex-col">
        <div className="bg-[#2b579a]">
          <div className="h-[46px] flex items-start">
            <Qat />
            <div className="h-[44px] flex items-center text-[11.2px] text-[#e8eef7] whitespace-nowrap">MindManager - Устав проекта .Открыть кофейню</div>
            <WindowButtons />
          </div>
          <TabRow />
        </div>
        <div className="h-[93px] bg-[#f0f0f0] flex">
          {groups.map((g) => (
            <RibbonGroup key={g.label} g={g} />
          ))}
        </div>
        <div className="flex-1 flex min-h-0">
          <div className="w-[1495px] shrink-0 flex flex-col">
            <div className="flex-1 flex min-h-0">
              <div className="w-[3px] bg-[#e4e4e4] border-r border-[#777] border-t-[3px] border-t-[#a8a8a8]" />
              <div className="flex-1 flex flex-col min-w-0">
                <div className="flex-1 flex min-h-0 border-t-[3px] border-[#a8a8a8]">
                  <div className="flex-1 bg-white pl-[437px] pt-[80px] overflow-hidden">
                    <MindMap />
                  </div>
                  <VScroll />
                  <div className="w-[4px]" />
                </div>
                <HScroll />
              </div>
            </div>
            <TabBar />
          </div>
          <SideBar />
        </div>
        <StatusBar />
      </div>
      <div className="w-[6px] shrink-0 h-[899px] flex flex-col">
        {stripBlocks.map((b) => (
          <div key={b} className={b} />
        ))}
      </div>
    </div>
  );
}
